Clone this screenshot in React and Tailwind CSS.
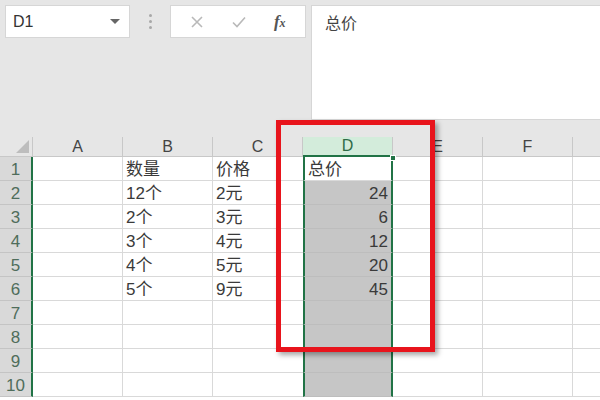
import React from "react";

const cols = [
  { k: "A", w: "w-[90px]" },
  { k: "B", w: "w-[90px]" },
  { k: "C", w: "w-[90px]" },
  { k: "D", w: "w-[90px]" },
  { k: "E", w: "w-[90px]" },
  { k: "F", w: "w-[90px]" },
];

const data = {
  1: { B: "数量", C: "价格", D: "总价" },
  2: { B: "12个", C: "2元", D: "24" },
  3: { B: "2个", C: "3元", D: "6" },
  4: { B: "3个", C: "4元", D: "12" },
  5: { B: "4个", C: "5元", D: "20" },
  6: { B: "5个", C: "9元", D: "45" },
};

const font = { fontFamily: '"Liberation Sans","Noto Sans CJK SC",sans-serif' };

function Cell({ r, c }) {
  const v = (data[r] || {})[c.k] || "";
  const isD = c.k === "D";
  const numeric = /^\d+$/.test(v);
  let cls = `${c.w} h-full shrink-0 border-r border-b border-[#d9d9d9] flex items-center pt-[2px] px-[3px] text-[17px] text-[#3a3a3a] overflow-hidden whitespace-nowrap`;
  if (isD) {
    cls = `${c.w} h-full shrink-0 border-b border-[#d9d9d9] border-x-2 border-x-[#217346] flex items-center pt-[2px] px-[3px] text-[17px] text-[#3a3a3a] ${r === 1 ? "bg-white" : "bg-[#c6c6c6] border-b-[#bdbdbd]"}`;
  }
  if (c.k === "C") cls = cls.replace("border-r ", "");
  return (
    <div className={`${cls} ${numeric ? "justify-end" : "justify-start"}`}>{v}</div>
  );
}

export default function App() {
  return (
    <div className="w-[600px] h-[400px] overflow-hidden relative bg-white" style={font}>
      {/* top area */}
      <div className="h-[137px] bg-[#e6e6e6] flex items-start pt-[5px] pl-[5px]">
        <div className="w-[125px] h-[33px] bg-white border border-[#d6d6d6] flex items-center justify-between pl-[7px] pr-[9px]">
          <span className="text-[16px] text-[#333]">D1</span>
          <span className="w-0 h-0 border-l-[5px] border-r-[5px] border-t-[5px] border-l-transparent border-r-transparent border-t-[#666]"></span>
        </div>
        <div className="w-[40px] h-[33px] flex flex-col items-center justify-center gap-[3px]">
          <span className="w-[3px] h-[3px] rounded-full bg-[#a8a8a8]"></span>
          <span className="w-[3px] h-[3px] rounded-full bg-[#a8a8a8]"></span>
          <span className="w-[3px] h-[3px] rounded-full bg-[#a8a8a8]"></span>
        </div>
        <div className="w-[136px] h-[33px] bg-white border border-[#d6d6d6] flex items-center justify-around px-[6px]">
          <svg width="14" height="14" viewBox="0 0 14 14"><path d="M2 2L12 12M12 2L2 12" stroke="#b9b9b9" strokeWidth="1.6" /></svg>
          <svg width="16" height="14" viewBox="0 0 16 14"><path d="M2 7.5L6 11.5L14 2.5" stroke="#b9b9b9" strokeWidth="1.6" fill="none" /></svg>
          <span className="text-[17px] italic text-[#555] font-bold" style={{ fontFamily: '"Liberation Serif",serif' }}>f<span className="text-[12px]">x</span></span>
        </div>
        <div className="ml-[5px] flex-1 h-[115px] bg-white border-l border-t border-b border-[#d6d6d6] pl-[13px] pt-[6px]">
          <span className="text-[16px] text-[#444]">总价</span>
        </div>
      </div>

      {/* header row */}
      <div className="h-[20px] flex bg-[#e6e6e6]">
        <div className="w-[33px] h-full shrink-0 border-r border-b border-[#c8c8c8] relative">
          <div className="absolute right-[3px] bottom-[3px] w-0 h-0" style={{ borderBottom: "13px solid #bdbdbd", borderLeft: "13px solid transparent" }}></div>
        </div>
        {cols.map((c) => (
          <div
            key={c.k}
            className={`${c.w} h-full shrink-0 flex items-center justify-center text-[16px] border-r ${c.k === "D" ? "bg-[#d3ecdb] text-[#2e6b47] border-b-2 border-b-[#217346] border-r-[#c8c8c8]" : "text-[#444] border-b border-[#c8c8c8]"}`}
          >
            {c.k}
          </div>
        ))}
        <div className="flex-1 border-b border-[#c8c8c8]"></div>
      </div>

      {/* rows */}
      {Array.from({ length: 10 }, (_, i) => i + 1).map((r) => (
        <div key={r} className="h-[24px] flex">
          <div className="w-[33px] h-full shrink-0 bg-[#d9d9d9] border-r-2 border-r-[#217346] border-b border-b-[#c4c4c4] flex items-center justify-center pt-[2px] text-[17px] text-[#4f6d5b]">
            {r}
          </div>
          {cols.map((c) => (
            <Cell key={c.k} r={r} c={c} />
          ))}
          <div className="flex-1 h-full border-b border-[#d9d9d9]"></div>
        </div>
      ))}

      {/* fill handle */}
      <div className="absolute left-[390px] top-[155px] w-[6px] h-[6px] bg-[#217346] border border-white"></div>

      {/* red highlight box */}
      <div className="absolute left-[276px] top-[120px] w-[159px] h-[232px] border-[5px] border-[#e8141c] shadow-[3px_3px_5px_rgba(0,0,0,0.35)] pointer-events-none"></div>
    </div>
  );
}
